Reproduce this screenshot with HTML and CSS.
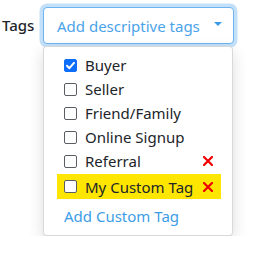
FILE: index.html
```html
<!DOCTYPE html>
<html>
<head>
<meta charset="utf-8">
<link rel="stylesheet" href="styles.css">
</head>
<body>
<div class="field">
  <label class="label">Tags</label>
  <div class="picker">
    <button class="toggle">
      <span class="placeholder">Add descriptive tags</span>
      <span class="caret"></span>
    </button>
    <div class="menu">
      <div class="row"><span class="box checked"><svg viewBox="0 0 13 13" width="13" height="13"><path d="M3 6.8 L5.4 9.2 L10 3.9" fill="none" stroke="#fff" stroke-width="2" stroke-linecap="round" stroke-linejoin="round"/></svg></span><span class="text">Buyer</span></div>
      <div class="row"><span class="box"></span><span class="text">Seller</span></div>
      <div class="row"><span class="box"></span><span class="text">Friend/Family</span></div>
      <div class="row"><span class="box"></span><span class="text">Online Signup</span></div>
      <div class="row"><span class="box"></span><span class="text">Referral</span><span class="del"><svg viewBox="0 0 10 10" width="10" height="10"><path d="M1 1 L9 9 M9 1 L1 9" stroke="#f00000" stroke-width="2.2" stroke-linecap="square"/></svg></span></div>
      <div class="row hl"><span class="box"></span><span class="text">My Custom Tag</span><span class="del"><svg viewBox="0 0 10 10" width="10" height="10"><path d="M1 1 L9 9 M9 1 L1 9" stroke="#f00000" stroke-width="2.2" stroke-linecap="square"/></svg></span></div>
      <div class="add">Add Custom Tag</div>
    </div>
  </div>
</div>
</body>
</html>
```
FILE: styles.css
```css
html, body {
  margin: 0;
  padding: 0;
  background: #fff;
}
body {
  font-family: "Noto Sans", "Open Sans", sans-serif;
  font-size: 15px;
  color: #212529;
}
.field {
  display: flex;
  align-items: flex-start;
  padding: 7px 0 0 2px;
}
.label {
  width: 41px;
  line-height: 37px;
  font-weight: 500;
  color: #212529;
}
.picker {
  display: flex;
  flex-direction: column;
  width: 191px;
}
.toggle {
  box-sizing: border-box;
  height: 37px;
  width: 191px;
  display: flex;
  align-items: center;
  justify-content: space-between;
  padding: 0 12px 0 13px;
  border: 1px solid #6fb3ef;
  border-radius: 4px;
  background: #fff;
  box-shadow: 0 0 0 3.5px #c2e0fa;
  font: inherit;
  color: #4ba3ea;
}
.caret {
  width: 0;
  height: 0;
  border-left: 4.5px solid transparent;
  border-right: 4.5px solid transparent;
  border-top: 4.5px solid #3a9ce8;
  margin-top: -3px;
  margin-right: -1px;
}
.menu {
  box-sizing: border-box;
  margin-top: 2px;
  width: 190px;
  border: 1px solid rgba(0,0,0,0.15);
  border-radius: 4px;
  background: #fff;
  box-shadow: 0 6px 16px rgba(0,0,0,0.14);
  padding: 6px 11px 7px 13px;
}
.row {
  display: flex;
  align-items: center;
  height: 24px;
  padding: 0 8px 0 7px;
}
.row.hl {
  background: #ffe600;
  height: 25px;
  margin-top: 1px;
}
.box {
  box-sizing: border-box;
  width: 13px;
  height: 13px;
  border: 1px solid #5a5e63;
  border-radius: 2px;
  background: #fff;
  flex: none;
  display: flex;
}
.box.checked {
  background: #0d6efd;
  border-color: #0d6efd;
}
.box.checked svg {
  margin: -1px;
}
.text {
  margin-left: 8px;
  flex: 1;
  white-space: nowrap;
}
.del {
  display: flex;
  flex: none;
}
.add {
  height: 24px;
  line-height: 24px;
  margin-top: 5px;
  padding-left: 7px;
  color: #3c9de6;
}
```
